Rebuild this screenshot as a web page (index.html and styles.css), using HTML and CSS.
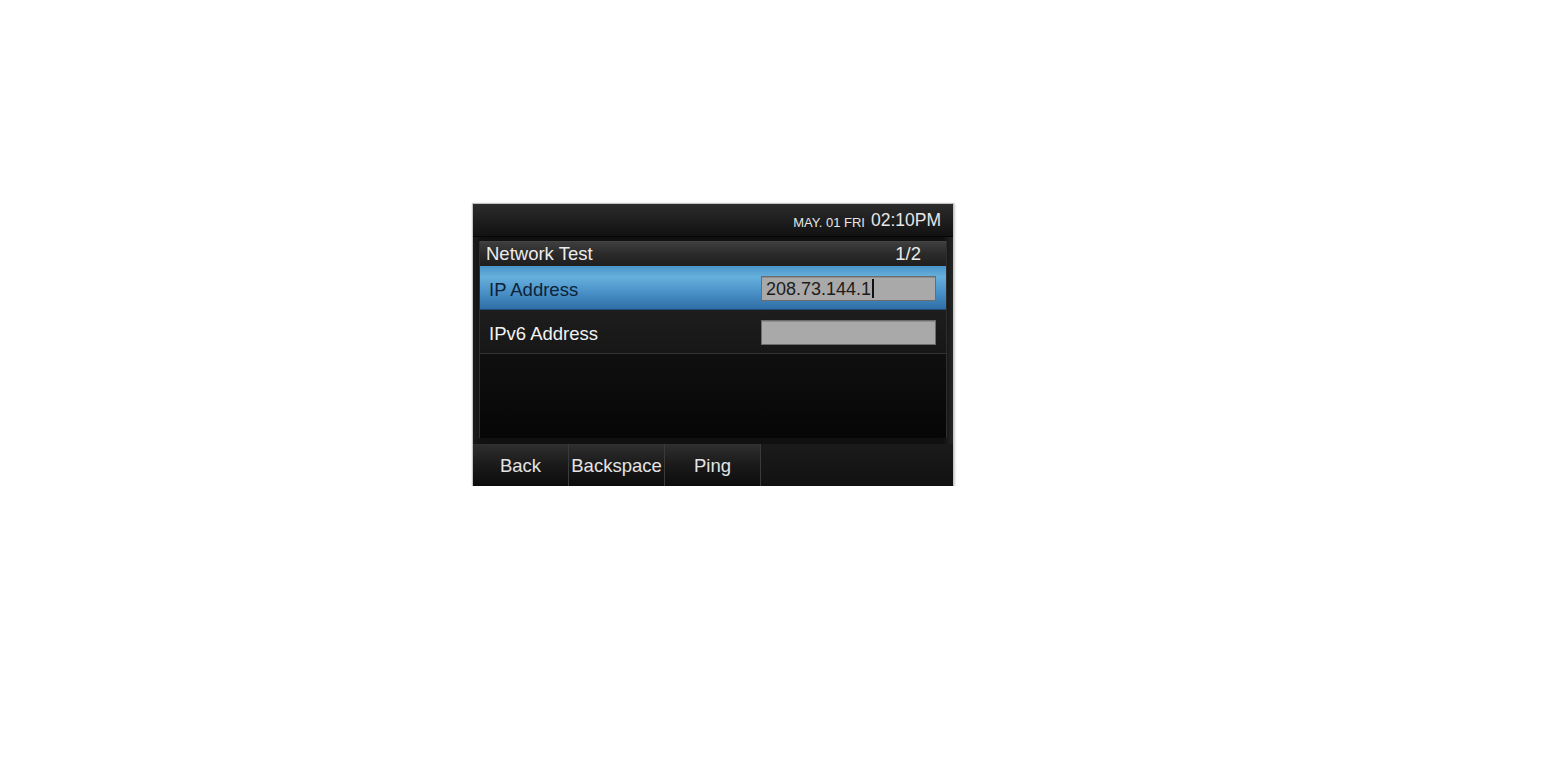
FILE: index.html
```html
<!DOCTYPE html>
<html>
<head>
<meta charset="utf-8">
<link rel="stylesheet" href="styles.css">
</head>
<body>
<div class="screen">
  <div class="status">
    <span class="date">MAY. 01 FRI</span>
    <span class="time">02:10PM</span>
  </div>
  <div class="main">
    <div class="panel">
      <div class="title">
        <span>Network Test</span>
        <span class="page">1/2</span>
      </div>
      <div class="row selected">
        <span class="label">IP Address</span>
        <div class="field">208.73.144.1<span class="caret"></span></div>
      </div>
      <div class="row">
        <span class="label">IPv6 Address</span>
        <div class="field"></div>
      </div>
      <div class="empty"></div>
    </div>
  </div>
  <div class="softkeys">
    <div class="key">Back</div>
    <div class="key">Backspace</div>
    <div class="key">Ping</div>
    <div class="key blank"></div>
  </div>
</div>
</body>
</html>
```

FILE: styles.css
```css
html, body {
  margin: 0;
  padding: 0;
  background: #ffffff;
}
body {
  font-family: "Liberation Sans", Arial, sans-serif;
}
.screen {
  margin: 204px 0 0 473px;
  width: 480px;
  height: 282px;
  background: #0a0a0a;
  display: flex;
  flex-direction: column;
  box-shadow: 0 0 1px 1px #c4c4c4, 1px 1px 2px 1px #d0d0d0;
}
.status {
  height: 32px;
  flex: none;
  background: linear-gradient(#2c2c2c, #1c1c1c 60%, #121212);
  border-bottom: 1px solid #050505;
  display: flex;
  align-items: center;
  justify-content: flex-end;
  padding-right: 12px;
  color: #e6e6e6;
  gap: 6px;
}
.date {
  font-size: 13px;
  margin-top: 4px;
}
.time {
  font-size: 17.5px;
}
.main {
  flex: 1;
  display: flex;
  flex-direction: column;
  padding: 4px 6px 6px 6px;
  background: linear-gradient(90deg, #1a1a1a, #101010 2%, #101010 98%, #262626);
}
.panel {
  flex: 1;
  display: flex;
  flex-direction: column;
  background: linear-gradient(#1e1e1e, #121212 45%, #060606);
  border-left: 1px solid #2e2e2e;
  border-right: 1px solid #2e2e2e;
}
.title {
  height: 24px;
  flex: none;
  display: flex;
  align-items: center;
  justify-content: space-between;
  padding: 0 25px 0 6px;
  color: #ececec;
  font-size: 18.5px;
  background: linear-gradient(#3e3e3e, #2a2a2a 50%, #1e1e1e);
  border-top: 1px solid #444;
}
.row {
  height: 43px;
  flex: none;
  display: flex;
  align-items: center;
  justify-content: space-between;
  padding: 0 10px 0 9px;
  color: #f2f2f2;
  font-size: 18.5px;
  border-bottom: 1px solid #333;
  background: linear-gradient(#1d1d1d, #171717);
}
.row.selected {
  color: #0e2238;
  border-bottom: 1px solid #1d4a78;
  background: linear-gradient(#4a93c8, #66b0dc 25%, #4a92c8 60%, #2f6ea6);
}
.label {
  margin-top: 4px;
}
.field {
  width: 169px;
  height: 23px;
  background: #a9a9a9;
  border: 1px solid #6c6c6c;
  box-shadow: inset 0 1px 0 #8f8f8f;
  color: #1c1c1c;
  font-size: 18px;
  line-height: 24px;
  padding-left: 4px;
  box-sizing: content-box;
  display: flex;
  align-items: center;
  margin-top: 2px;
}
.caret {
  display: inline-block;
  width: 2px;
  height: 19px;
  background: #111;
  margin-left: 1px;
}
.empty {
  flex: 1;
}
.softkeys {
  height: 42px;
  flex: none;
  display: flex;
  background: #151515;
}
.key {
  width: 95px;
  display: flex;
  align-items: center;
  justify-content: center;
  color: #e4e4e4;
  font-size: 18.5px;
  padding-top: 1px;
  background: linear-gradient(#2f2f2f, #1a1a1a 50%, #0c0c0c);
  border-right: 1px solid #3a3a3a;
}
.key.blank {
  flex: 1;
  border-right: none;
  background: linear-gradient(#1a1a1a, #121212);
}
```
